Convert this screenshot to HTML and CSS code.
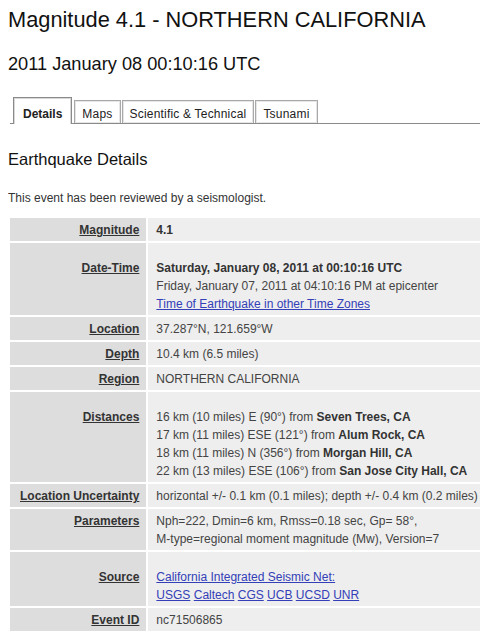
FILE: index.html
```html
<!DOCTYPE html>
<html>
<head>
<meta charset="utf-8">
<title>Magnitude 4.1 - NORTHERN CALIFORNIA</title>
<link rel="stylesheet" href="styles.css">
</head>
<body>
<h1 class="title">Magnitude 4.1 - NORTHERN CALIFORNIA</h1>
<h2 class="subtitle">2011 January 08 00:10:16 UTC</h2>
<div class="tabs">
  <span class="tab active">Details</span>
  <span class="tab">Maps</span>
  <span class="tab">Scientific &amp; Technical</span>
  <span class="tab">Tsunami</span>
</div>
<h3 class="section">Earthquake Details</h3>
<p class="note">This event has been reviewed by a seismologist.</p>
<table class="details">
  <tr>
    <th><a class="lbl">Magnitude</a></th>
    <td><b>4.1</b></td>
  </tr>
  <tr class="spaced">
    <th><a class="lbl">Date-Time</a></th>
    <td><b>Saturday, January 08, 2011 at 00:10:16 UTC</b><br>Friday, January 07, 2011 at 04:10:16 PM at epicenter<br><a class="link">Time of Earthquake in other Time Zones</a></td>
  </tr>
  <tr>
    <th><a class="lbl">Location</a></th>
    <td>37.287°N, 121.659°W</td>
  </tr>
  <tr>
    <th><a class="lbl">Depth</a></th>
    <td>10.4 km (6.5 miles)</td>
  </tr>
  <tr>
    <th><a class="lbl">Region</a></th>
    <td>NORTHERN CALIFORNIA</td>
  </tr>
  <tr class="spaced">
    <th><a class="lbl">Distances</a></th>
    <td>16 km (10 miles) E (90°) from <b>Seven Trees, CA</b><br>17 km (11 miles) ESE (121°) from <b>Alum Rock, CA</b><br>18 km (11 miles) N (356°) from <b>Morgan Hill, CA</b><br>22 km (13 miles) ESE (106°) from <b>San Jose City Hall, CA</b></td>
  </tr>
  <tr>
    <th><a class="lbl">Location Uncertainty</a></th>
    <td>horizontal +/- 0.1 km (0.1 miles); depth +/- 0.4 km (0.2 miles)</td>
  </tr>
  <tr>
    <th><a class="lbl">Parameters</a></th>
    <td>Nph=222, Dmin=6 km, Rmss=0.18 sec, Gp= 58°,<br>M-type=regional moment magnitude (Mw), Version=7</td>
  </tr>
  <tr class="spaced">
    <th><a class="lbl">Source</a></th>
    <td><a class="link">California Integrated Seismic Net:</a><br><a class="link">USGS</a> <a class="link">Caltech</a> <a class="link">CGS</a> <a class="link">UCB</a> <a class="link">UCSD</a> <a class="link">UNR</a></td>
  </tr>
  <tr>
    <th><a class="lbl">Event ID</a></th>
    <td>nc71506865</td>
  </tr>
</table>
</body>
</html>
```
FILE: styles.css
```css
html, body {
  overflow-x: hidden;
}
body {
  margin: 8px;
  font-family: "Liberation Sans", Arial, sans-serif;
  font-size: 12px;
  color: #333;
  background: #fff;
}
.title {
  margin: 0;
  font-size: 21.8px;
  line-height: 24px;
  font-weight: normal;
  color: #111;
}
.subtitle {
  margin: 22px 0 0;
  font-size: 18.2px;
  line-height: 20px;
  font-weight: normal;
  color: #111;
}
.tabs {
  margin: 23px -8px 0 2px;
  padding-left: 3px;
  height: 26px;
  display: flex;
  align-items: flex-end;
  gap: 1px;
  border-bottom: 1px solid #8a8a8a;
}
.tab {
  box-sizing: border-box;
  height: 23px;
  padding: 3px 7px 0;
  display: flex;
  align-items: center;
  border: 1px solid #a8a8a8;
  border-bottom: none;
  background: #fff;
  box-shadow: inset 0 0 0 1px #e6e6e6;
  color: #222;
  font-size: 12px;
  letter-spacing: 0.2px;
}
.tab.active {
  height: 27px;
  margin-bottom: -1px;
  margin-right: 1px;
  padding: 5px 9px 0;
  font-weight: bold;
  letter-spacing: 0;
  border-color: #8a8a8a;
  box-shadow: inset 1px 1px 0 #d8d8d8, inset -1px 0 0 #d8d8d8;
}
.section {
  margin: 25px 0 0;
  font-size: 16.5px;
  line-height: 20px;
  font-weight: normal;
  color: #111;
}
.note {
  margin: 22px 0 0;
  line-height: 15px;
  color: #333;
}
.details {
  margin-top: 10px;
  border-collapse: separate;
  border-spacing: 2px;
  margin-left: 0;
}
.details th,
.details td {
  white-space: nowrap;
  line-height: 18px;
  vertical-align: baseline;
  font-size: 12px;
}
.details th {
  background: #dddddd;
  text-align: right;
  padding: 3px 7px 2px 10px;
  font-weight: bold;
}
.details td {
  background: #eeeeee;
  text-align: left;
  padding: 3px 20px 2px 8px;
  color: #444;
}
.details td b {
  color: #333;
}
.details tr.spaced th,
.details tr.spaced td {
  padding-top: 16px;
}
.lbl {
  color: #333;
  text-decoration: underline;
}
.link {
  color: #3340b8;
  text-decoration: underline;
}
```
